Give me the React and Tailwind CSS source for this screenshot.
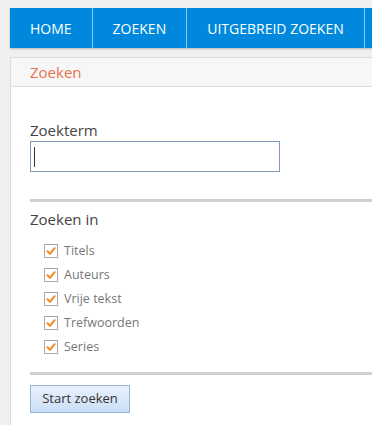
import React from "react";

function Check() {
  return (
    <span className="w-[14px] h-[14px] border border-[#a9a9a9] bg-white flex items-center justify-center shrink-0">
      <svg width="10" height="10" viewBox="0 0 10 10">
        <path d="M1.5 5.2 L4 7.8 L8.6 2.2" fill="none" stroke="#f08a1c" strokeWidth="2" strokeLinecap="round" strokeLinejoin="round" />
      </svg>
    </span>
  );
}

export default function App() {
  const items = ["Titels", "Auteurs", "Vrije tekst", "Trefwoorden", "Series"];
  const navs = ["HOME", "ZOEKEN", "UITGEBREID ZOEKEN"];
  return (
    <div className="w-[372px] h-[425px] overflow-hidden bg-[#f0f0f0] pl-[10px] pt-[8px]" style={{ fontFamily: '"Open Sans", sans-serif' }}>
      <nav className="h-[40px] w-[380px] bg-[#0089dc] flex items-stretch shadow-[0_1px_2px_rgba(0,0,0,0.25)]">
        {navs.map((n) => (
          <div key={n} className="px-[20px] flex items-center text-white text-[14px] border-r border-[#8cc8ee]">
            {n}
          </div>
        ))}
      </nav>
      <div className="mt-[9px] w-[380px] h-[400px] bg-white border-l border-t border-[#dcdcdc]">
        <div className="h-[29px] bg-[#f7f7f7] border-b border-[#dedede] pl-[19px] flex items-center text-[15px] text-[#e8734e]">
          Zoeken
        </div>
        <div className="pl-[19px] pt-[33px]">
          <div className="text-[15px] text-[#444] leading-[20px]">Zoekterm</div>
          <div className="mt-[1px] w-[250px] h-[31px] border border-[#7f9db9] bg-white flex items-center pl-[3px]">
            <span className="w-[1px] h-[20px] bg-[#333]"></span>
          </div>
          <div className="mt-[27px] h-[3px] bg-[#cfcfcf]"></div>
          <div className="mt-[7px] text-[15px] text-[#444] leading-[20px]">Zoeken in</div>
          <div className="mt-[15px] pl-[14px] flex flex-col gap-[10px]">
            {items.map((t) => (
              <div key={t} className="flex items-center gap-[6px] h-[14px]">
                <Check />
                <span className="text-[12.5px] text-[#777] leading-[14px]">{t}</span>
              </div>
            ))}
          </div>
          <div className="mt-[18px] h-[3px] bg-[#cfcfcf]"></div>
          <button className="mt-[10px] w-[100px] h-[28px] border border-[#98b3d3] bg-gradient-to-b from-[#e9f2fc] to-[#c9def6] text-[13px] text-[#333] flex items-center justify-center">
            Start zoeken
          </button>
        </div>
      </div>
    </div>
  );
}
